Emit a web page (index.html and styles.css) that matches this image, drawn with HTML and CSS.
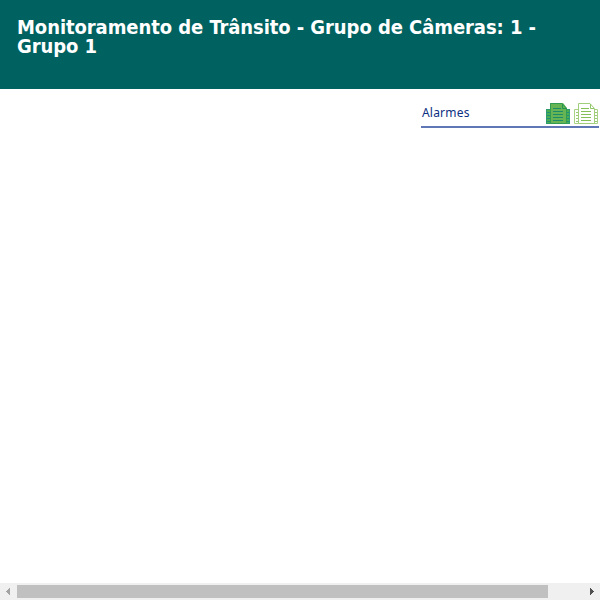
FILE: index.html
```html
<!DOCTYPE html>
<html lang="pt-BR">
<head>
<meta charset="utf-8">
<title>Monitoramento de Trânsito</title>
<link rel="stylesheet" href="styles.css">
</head>
<body>
<header class="header"><h1 class="title">Monitoramento de Trânsito - Grupo de Câmeras: 1 -<br>Grupo 1</h1></header>
<main class="content">
  <section class="alarms">
    <span class="label">Alarmes</span>
    <div class="icons">
      <svg class="icon" viewBox="0 0 24 22">
        <path d="M0 6h5v15H0zM19 6h5v15h-5z" fill="#4cae50"/>
        <path d="M.5 6.500h4v14h-4zM19.500 6.500h4v14h-4z" fill="none" stroke="#2f9c70"/>
        <path d="M1 9.500h3M1 12.500h3M1 15.500h3M1 18.500h3M20 9.500h3M20 12.500h3M20 15.500h3M20 18.500h3" stroke="#209078"/>
        <path d="M4 0h13l4 5v16H4z" fill="#66b454"/>
        <path d="M4.500 20.500V.5H16l4.500 5v15z" fill="none" stroke="#2f9c52"/>
        <path d="M16.500 1v4.500h4" fill="none" stroke="#239451"/>
        <path d="M7 5.500h8M7 8.500h10M7 11.500h10M7 14.500h10M7 17.500h10" stroke="#1c8c6a"/>
      </svg>
      <svg class="icon" viewBox="0 0 24 22">
        <path d="M.5 6.500h4v14h-4zM19.500 6.500h4v14h-4z" fill="#fff" stroke="#a8d285"/>
        <path d="M2 9.500h2M2 12.500h2M2 15.500h2M2 18.500h2M21 9.500h2M21 12.500h2M21 15.500h2M21 18.500h2" stroke="#9bcb75"/>
        <path d="M4.500 20.500V.5H16l4.500 5v15z" fill="#fff" stroke="#a0ce7b"/>
        <path d="M16.500 1v4.500H20" fill="none" stroke="#8fc567"/>
        <path d="M7 5.500h8M7 8.500h10M7 11.500h10M7 14.500h10M7 17.500h10" stroke="#84bf57"/>
      </svg>
    </div>
  </section>
</main>
<footer class="scrollbar">
  <svg class="arrow" viewBox="0 0 17 17" shape-rendering="crispEdges"><path d="M10 5v7L6 8.500z" fill="#a3a3a3"/></svg>
  <div class="track"><div class="thumb"></div></div>
  <svg class="arrow" viewBox="0 0 17 17" shape-rendering="crispEdges"><path d="M7 5v7l4-3.500z" fill="#505050"/></svg>
</footer>
</body>
</html>
```
FILE: styles.css
```css
* { box-sizing: border-box; }
body { margin: 0; height: 600px; overflow: hidden; display: flex; flex-direction: column; background: #fff; }
.header { height: 89px; padding: 18px 17px; background: #006260; }
.title { margin: 0; color: #fff; font: bold 20px/19px "DejaVu Sans Condensed", "DejaVu Sans", sans-serif; font-stretch: condensed; letter-spacing: -0.07px; white-space: nowrap; }
.content { flex: 1; padding: 13px 1px 0 421px; }
.alarms { height: 26px; display: flex; justify-content: space-between; border-bottom: 2px solid #6077b5; }
.label { padding: 2px 0 0 1px; color: #0b2f82; font: 12px/18px "Noto Sans", sans-serif; letter-spacing: 0.2px; }
.icons { display: flex; gap: 4px; padding: 1px 1px 0 0; }
.icon { width: 24px; height: 22px; }
.scrollbar { height: 17px; display: flex; background: #f0f0f0; }
.arrow { width: 17px; height: 17px; }
.track { flex: 1; padding: 2px 0; }
.thumb { width: 531px; height: 13px; background: #c0c0c0; }
```
